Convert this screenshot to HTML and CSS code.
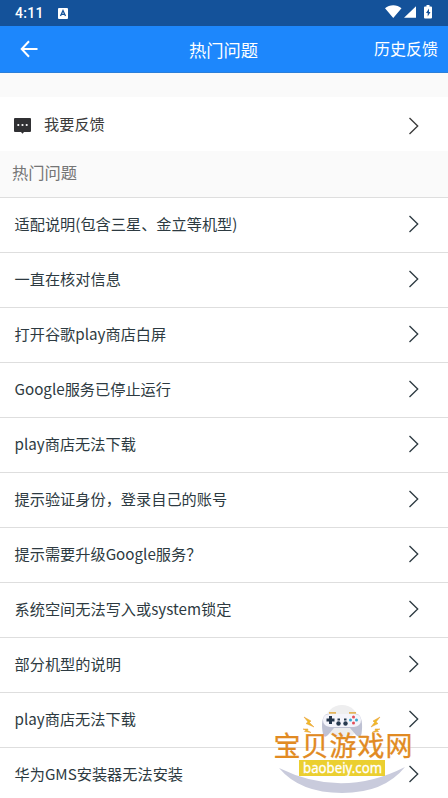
FILE: index.html
```html
<!DOCTYPE html>
<html lang="zh-CN">
<head>
<meta charset="utf-8">
<title>热门问题</title>
<link rel="stylesheet" href="styles.css">
</head>
<body>
<svg class="defs" width="0" height="0"><symbol id="chevron" viewBox="0 0 12 18"><path d="M1.5 1 L9.7 9 L1.5 17" fill="none" stroke="currentColor" stroke-width="1.35"/></symbol></svg>
<div class="screen">
  <div class="status">
    <span class="clock">4:11</span>
    <svg class="app-badge" viewBox="0 0 10 11"><rect width="10" height="11" rx="1" fill="#fff"/><path d="M2.5 8 L5 2.5 L7.5 8 M3.5 6.4 H6.5" fill="none" stroke="#14529a" stroke-width="1.3"/></svg>
    <svg class="signals" viewBox="0 0 50 16"><path d="M0 3.2 C4.5 -.8 12 -.8 16.5 3.2 L8.25 13Z M19 12.8 L31 1.2 V12.8Z" fill="#fff"/><path d="M40 1.5 h1.5 V0 h3 V1.5 h1.5 q1 0 1 1 V12.5 q0 1-1 1 H40 q-1 0-1-1 V2.5 q0-1 1-1Z" fill="#fff"/><path d="M44 3.5 L41 8 H42.7 V11.6 L45.5 7 H44Z" fill="#14529a"/></svg>
  </div>
  <header class="toolbar">
    <svg class="back" viewBox="0 0 18 18"><path d="M17.5 9 H2 M9 1.2 L1.7 9 L9 16.8" fill="none" stroke="#fff" stroke-width="2"/></svg>
    <h1 class="title">热门问题</h1>
    <span class="history">历史反馈</span>
  </header>
  <div class="feedback">
    <svg class="bubble" viewBox="0 0 17 16"><path d="M1 0 H16 Q17 0 17 1 V13 Q17 14 16 14 H10 L8.5 15.8 L7 14 H1 Q0 14 0 13 V1 Q0 0 1 0Z" fill="#303033"/><g fill="#fff"><circle cx="4.3" cy="7" r="1.1"/><circle cx="8.5" cy="7" r="1.1"/><circle cx="12.7" cy="7" r="1.1"/></g></svg>
    <span class="label">我要反馈</span><svg class="arrow"><use href="#chevron"/></svg>
  </div>
  <h2 class="section">热门问题</h2>
  <ul class="list">
    <li><span>适配说明(包含三星、金立等机型)</span><svg class="arrow"><use href="#chevron"/></svg></li>
    <li><span>一直在核对信息</span><svg class="arrow"><use href="#chevron"/></svg></li>
    <li><span>打开谷歌play商店白屏</span><svg class="arrow"><use href="#chevron"/></svg></li>
    <li><span>Google服务已停止运行</span><svg class="arrow"><use href="#chevron"/></svg></li>
    <li><span>play商店无法下载</span><svg class="arrow"><use href="#chevron"/></svg></li>
    <li><span>提示验证身份，登录自己的账号</span><svg class="arrow"><use href="#chevron"/></svg></li>
    <li><span>提示需要升级Google服务？</span><svg class="arrow"><use href="#chevron"/></svg></li>
    <li><span>系统空间无法写入或system锁定</span><svg class="arrow"><use href="#chevron"/></svg></li>
    <li><span>部分机型的说明</span><svg class="arrow"><use href="#chevron"/></svg></li>
    <li><span>play商店无法下载</span><svg class="arrow"><use href="#chevron"/></svg></li>
    <li><span>华为GMS安装器无法安装</span><svg class="arrow"><use href="#chevron"/></svg></li>
  </ul>
  <svg class="watermark" viewBox="0 0 160 103">
    <circle cx="77" cy="27" r="17" fill="#eeeeef"/>
    <path d="M64 17.9 H71 M84 17.9 H91" stroke="#e3b45b" stroke-width="1.8"/>
    <path d="M62 19 H92 C97 20 98 30 96.500 39 Q95 44 91 40 L85 33 H69 L63 40 Q59 44 58 39 C56 30 57 20 62 19Z" fill="#bec1d3"/>
    <path d="M65 19 H89 Q96 19 96 25 Q96 31 89 32 H65 Q58 31 58 25 Q58 19 65 19Z" fill="#f4f4fb"/>
    <path d="M65.5 21 V29 M61.5 25 H69.5" stroke="#24364c" stroke-width="3"/>
    <g fill="#26394f"><circle cx="73.5" cy="28.5" r="2.2"/><circle cx="80.5" cy="28.5" r="2.2"/><rect x="72.5" y="23.5" width="2.5" height="2"/><rect x="79" y="23.5" width="2.5" height="2"/></g>
    <circle cx="88.5" cy="22" r="1.5" fill="#e44d58"/><circle cx="88.5" cy="28" r="1.5" fill="#e44d58"/><circle cx="85.5" cy="25" r="1.5" fill="#37a7cf"/><circle cx="91.5" cy="25" r="1.5" fill="#37a7cf"/>
    <path d="M39 22 L46 26 L44.5 27.5 L49 32 L41 28.5 L43 27Z M38 34 L43 34 L42.5 35.5 L46 37.5 L39.5 36.5 L41 35.5Z M115 22 L108 26 L109.5 27.5 L106 32 L113 28.5 L111 27Z M115 34 L110 34 L110.5 35.5 L107 37.5 L113.5 36.5 L112 35.5Z" fill="#f0bb25" stroke="#e69a3a" stroke-width=".5"/>
    <path d="M14 73 Q77 104 140 72 Q119 98 77 98 Q35 98 14 73Z" fill="#c9cbdc"/>
    <text class="wm-name" x="8.5" y="61" textLength="139" lengthAdjust="spacing">宝贝游戏网</text>
    <rect x="34" y="65" width="86" height="16" fill="#ebcf30"/>
    <text class="wm-url" x="38" y="77.5" textLength="79" lengthAdjust="spacingAndGlyphs">baobeiy.com</text>
  </svg>
</div>
</body>
</html>
```
FILE: styles.css
```css
* { box-sizing: border-box; }
body { margin: 0; font-family: "Noto Sans CJK SC", sans-serif; background: #fff; }
.defs { position: absolute; }
.screen { position: relative; width: 448px; height: 798px; overflow: hidden; background: #fafafa; }
.status { height: 26px; display: flex; align-items: center; padding: 0 13px 0 15px; background: #14529a; }
.clock { width: 43px; color: #fff; font: 500 14px/26px Roboto, sans-serif; letter-spacing: .3px; }
.app-badge { width: 10px; height: 11px; }
.signals { width: 50px; height: 16px; margin-left: auto; }
.toolbar { height: 47px; display: grid; grid-template-columns: 1fr auto 1fr; align-items: center; padding: 0 10px 0 20px; background: #1d87fc; color: #fff; border-bottom: 1px solid #2b7fda; }
.back { width: 18px; height: 18px; }
.title { margin: 1px 0 0 -11px; font-size: 17.3px; line-height: 26px; font-weight: 400; }
.history { justify-self: end; font-size: 16px; line-height: 24px; margin-bottom: 3px; }
.feedback { height: 54px; margin-top: 24px; display: flex; align-items: center; padding: 0 28px 0 14px; background: #fff; color: #3a3a3a; }
.bubble { width: 17px; height: 16px; margin: 3px 13px 0 0; }
.label { font-size: 15.2px; line-height: 24px; margin-bottom: 2px; }
.arrow { width: 12px; height: 18px; margin-left: auto; margin-top: 3px; flex: none; }
.section { height: 46px; margin: 0; padding-left: 12px; font-size: 16.3px; line-height: 43px; font-weight: 400; color: #757575; }
.list { margin: 0; padding: 0; list-style: none; background: #fff; color: #2d3a41; }
.list li { height: 54.98px; display: flex; align-items: center; padding: 0 28px 4px 14.5px; border-top: 1px solid #dedede; font-size: 15.2px; line-height: 24px; }
.list .arrow { margin-top: 2px; }
.watermark { position: absolute; left: 265px; top: 695px; width: 160px; height: 103px; }
.wm-name { font-size: 27px; fill: #e18a22; stroke: #e18a22; stroke-width: .3px; }
.wm-url { font: 14.5px "Noto Sans", sans-serif; fill: #fff; stroke: #fff; stroke-width: .3px; }
```
